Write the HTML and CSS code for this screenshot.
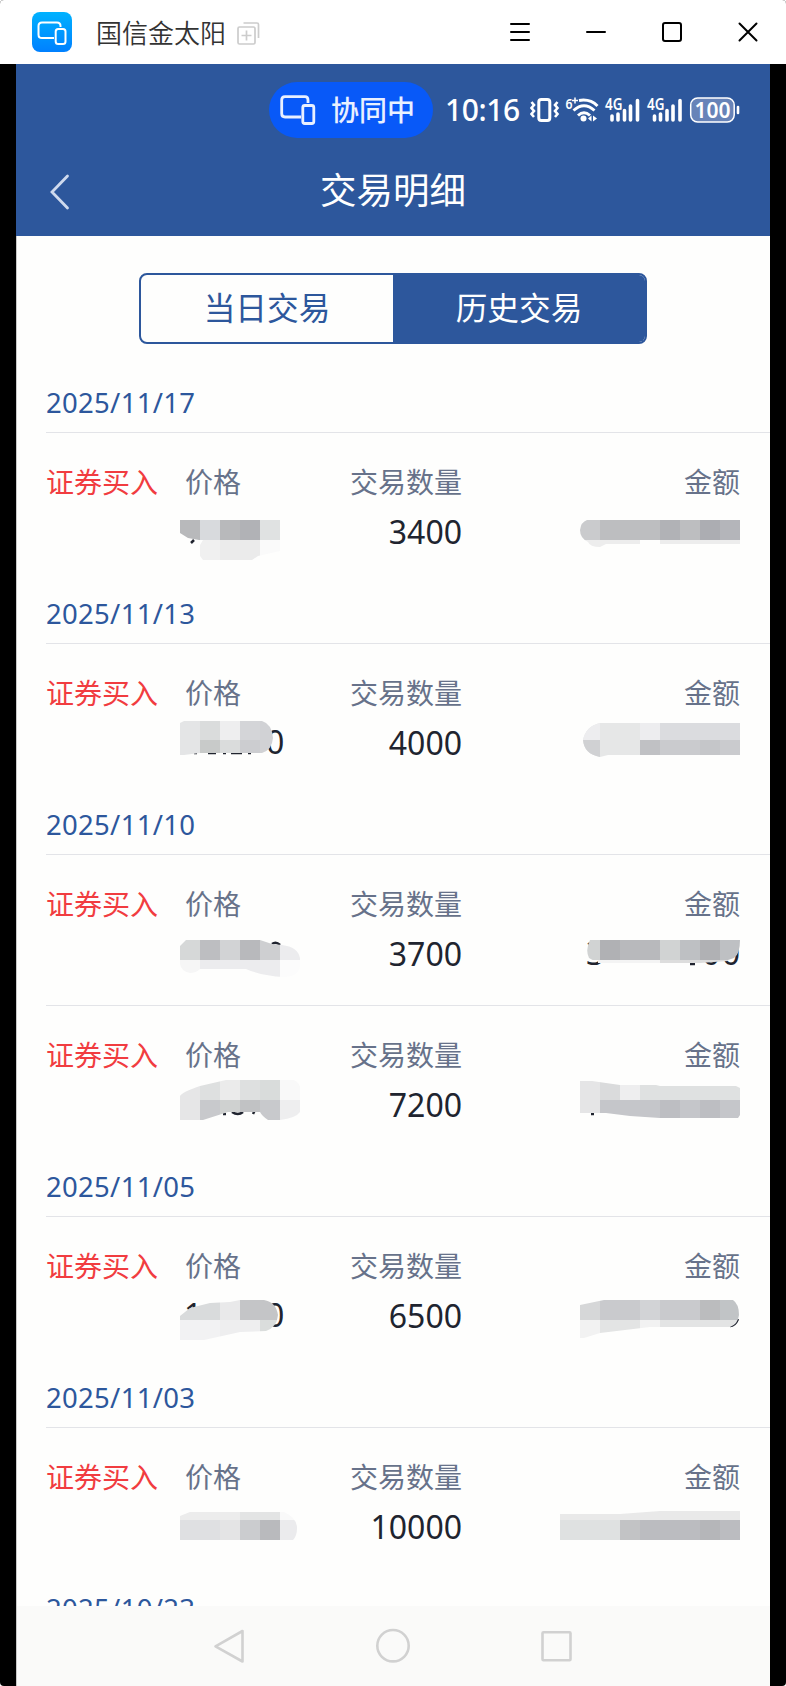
FILE: index.html
```html
<!DOCTYPE html>
<html lang="zh-CN">
<head>
<meta charset="utf-8">
<title>国信金太阳</title>
<link rel="stylesheet" href="styles.css">
</head>
<body>
<header class="window-bar">
  <svg class="app-icon" width="40" height="40" viewBox="0 0 40 40" fill="none" stroke="#fff" stroke-width="2">
    <defs><linearGradient id="sky" x2="0" y2="1"><stop stop-color="#00b2ff"/><stop offset="1" stop-color="#0080ff"/></linearGradient></defs>
    <rect width="40" height="40" rx="8" fill="url(#sky)" stroke="none"/>
    <path d="M22 26.100H10Q6.500 26.100 6.500 22.500V14Q6.500 10.500 10 10.500H25Q28.500 10.500 28.500 14V15"/>
    <rect x="23.700" y="17" width="9.800" height="15" rx="2.500"/>
  </svg>
  <span class="app-name">国信金太阳</span>
  <svg class="copy-icon" width="23" height="23" viewBox="0 0 23 23" fill="none" stroke="#ccc" stroke-width="1.700">
    <rect x="1" y="5" width="17" height="17" rx="1.500"/><path d="M6.500 1H20Q21.500 1 21.500 2.500V16M9.500 8.500v10M4.500 13.500h10"/>
  </svg>
  <svg class="window-tools" width="250" height="22" viewBox="0 0 250 22" fill="none" stroke="#000" stroke-width="2" stroke-linecap="round">
    <path d="M2 3H20M2 11H20M2 19H20M78 11H96"/><rect x="154" y="2" width="18" height="18" rx="2"/><path d="M230.500 2.500L247.500 19.500M247.500 2.500L230.500 19.500"/>
  </svg>
</header>
<main class="phone">
  <section class="top">
    <div class="status">
      <div class="pill">
        <svg width="36" height="30" viewBox="0 0 36 30" fill="none" stroke="#e8f0ff" stroke-width="2.800">
          <path d="M21 22H5Q1.700 22 1.700 18.500V5Q1.700 1.700 5 1.700H25Q28 1.700 28 5V8"/><rect x="22.800" y="10.500" width="11" height="18" rx="2"/>
        </svg>
        <span>协同中</span>
      </div>
      <span class="clock">10:16</span>
      <svg class="status-icons" width="212" height="30" viewBox="530 95 212 30" fill="none" stroke="#fff" stroke-width="2.600">
        <rect x="538.800" y="99.500" width="11" height="21" rx="2.500" stroke-width="3"/>
        <path d="M531.500 102l2.500 3-2.500 3 2.500 3-2.500 3 2.500 3M557.500 102l-2.500 3 2.500 3-2.500 3 2.500 3-2.500 3"/>
        <text class="tiny" x="565.500" y="108.500" textLength="7" lengthAdjust="spacingAndGlyphs">6</text><path d="M572 100.500h6M575 97.500v6" stroke-width="1.500"/>
        <path d="M579 100.500Q590 98.500 597.500 106M573.500 110.500Q584 101 594.500 110.500M578 115.500Q584 110 590 115.500" stroke-width="3"/>
        <circle cx="583.500" cy="118.500" r="3" fill="#fff" stroke="none"/><path d="M588 118.500l3.500-3v6zM593 115.500v6l4-3z" fill="#fff" stroke="none"/>
        <text class="net" x="605" y="109.500" textLength="17.500" lengthAdjust="spacingAndGlyphs">4G</text>
        <path d="M612 116V120M618 114V120M624.500 110.500V120M630.500 106V120M637.500 100.500V120" stroke-width="3.600" stroke-linecap="round"/>
        <text class="net" x="647" y="109.500" textLength="17.500" lengthAdjust="spacingAndGlyphs">4G</text>
        <path d="M654.500 116V120M660.500 114V120M667 110.500V120M673 106V120M680 100.500V120" stroke-width="3.600" stroke-linecap="round"/>
        <rect x="690.700" y="98" width="43.500" height="24" rx="7" fill="#6783b8" stroke-width="1.500"/>
        <path d="M738 107V113" stroke-width="2.600" stroke-linecap="round"/>
        <text class="charge" x="694.500" y="117.700" textLength="36">100</text>
      </svg>
    </div>
    <div class="nav-title">
      <svg class="back" width="20" height="36" viewBox="0 0 20 36" fill="none" stroke="#cfdaee" stroke-width="2.800" stroke-linecap="round"><path d="M17.500 2L2 18L17.500 34"/></svg>
      <h1>交易明细</h1>
    </div>
  </section>
  <section class="content">
    <div class="tabs"><button class="tab">当日交易</button><button class="tab active">历史交易</button></div>

    <h2 class="date">2025/11/17</h2>
    <article class="trade">
      <span class="kind">证券买入</span>
      <span class="price">价格</span>
      <div class="quantity"><span>交易数量</span><b>3400</b></div>
      <span class="amount">金额</span>
      <svg class="mask" viewBox="46 433 724 150">
        <clipPath id="p1"><path d="M180 520H280V551L258 556L252 560H203L200 556V545L203 540H199L188 538L180 533Z"/></clipPath>
        <clipPath id="a1"><path d="M587 520H740V544H606L600 547Q590 547 588 542Q580 538 580 530Q581 522 587 520Z"/></clipPath>
        <path class="ink" d="M194 540L191 543"/>
        <g clip-path="url(#p1)"><path fill="#b8b9bb" d="M180 520h20v20h-20zM220 520h20v20h-20z"/><path fill="#d8dadd" d="M200 520h20v20h-20z"/><path fill="#b1b2b6" d="M240 520h20v20h-20z"/><path fill="#e0e2e2" d="M260 520h20v20h-20z"/><path fill="#f0f0f0" d="M200 540h20v20h-20z"/><path fill="#ebebeb" d="M220 540h40v20h-40z"/><path fill="#fafafa" d="M260 540h20v20h-20z"/></g>
        <g clip-path="url(#a1)"><path fill="#cacbcd" d="M580 520h20v20h-20z"/><path fill="#bdbec0" d="M600 520h60v20h-60zM680 520h20v20h-20z"/><path fill="#b1b2b6" d="M660 520h20v20h-20z"/><path fill="#acadb2" d="M700 520h20v20h-20z"/><path fill="#b4b5ba" d="M720 520h20v20h-20z"/><path fill="#ededed" d="M580 540h60v8h-60zM660 540h80v4h-80z"/></g>
      </svg>
    </article>

    <h2 class="date">2025/11/13</h2>
    <article class="trade">
      <span class="kind">证券买入</span>
      <span class="price">价格</span>
      <div class="quantity"><span>交易数量</span><b>4000</b></div>
      <span class="amount">金额</span>
      <svg class="mask" viewBox="46 644 724 150">
        <clipPath id="p2"><path d="M184 721H262Q272 724 273 738Q272 750 262 753H200L184 755H180V723Z"/></clipPath>
        <clipPath id="a2"><path d="M600 723H740V755H608L600 757Q584 754 583 740Q586 726 600 723Z"/></clipPath>
        <text x="266" y="754">0</text><path class="ink" d="M194 753h3M208 753h8M223 753h3M231 753h11M248 753h3"/>
        <g clip-path="url(#p2)"><path fill="#e4e5e6" d="M180 720h20v36h-20z"/><path fill="#dadcdc" d="M200 720h20v20h-20zM220 740h20v20h-20z"/><path fill="#eeeeef" d="M220 720h20v20h-20z"/><path fill="#d4d5d8" d="M240 720h20v20h-20z"/><path fill="#d1d2d5" d="M260 720h20v40h-20z"/><path fill="#c8cac9" d="M200 740h20v20h-20z"/><path fill="#cccdd0" d="M240 740h20v20h-20z"/></g>
        <g clip-path="url(#a2)"><path fill="#e6e7e7" d="M580 720h60v40h-60z"/><path fill="#ededef" d="M580 720h20v20h-20zM640 720h20v20h-20z"/><path fill="#dbdcdf" d="M660 720h80v20h-80z"/><path fill="#d0d1d3" d="M580 740h20v20h-20z"/><path fill="#c0c1c4" d="M640 740h20v20h-20z"/><path fill="#cacbce" d="M660 740h80v20h-80z"/><path fill="#c5c6c9" d="M700 740h20v20h-20z"/></g>
      </svg>
    </article>

    <h2 class="date">2025/11/10</h2>
    <article class="trade">
      <span class="kind">证券买入</span>
      <span class="price">价格</span>
      <div class="quantity"><span>交易数量</span><b>3700</b></div>
      <span class="amount">金额</span>
      <svg class="mask" viewBox="46 855 724 150">
        <clipPath id="p3"><path d="M186 940H260L272 944L282 945Q298 947 300 958V966Q298 977 284 977Q262 976 246 969H200Q196 973 190 973Q181 971 180 964V946Z"/></clipPath>
        <clipPath id="a3"><path d="M590 940H740Q740 954 734 958L728 960V961L700 963H598L589 958Q585 950 590 940Z"/></clipPath>
        <path class="ink" d="M272 944q4-3 8 1"/><text x="586" y="965">3</text><text x="702" y="965" textLength="38">00</text><path class="ink" d="M690 964h5"/>
        <g clip-path="url(#p3)"><path fill="#d6d8d8" d="M180 940h20v20h-20z"/><path fill="#bdbec1" d="M200 940h20v20h-20z"/><path fill="#d2d3d5" d="M220 940h20v20h-20z"/><path fill="#b8b9bc" d="M240 940h20v20h-20z"/><path fill="#cecfd1" d="M260 940h20v20h-20z"/><path fill="#ececee" d="M280 940h20v20h-20zM200 960h80v20h-80z"/><path fill="#f6f6f6" d="M180 960h20v20h-20z"/><path fill="#fcfcfc" d="M280 960h20v20h-20z"/></g>
        <g clip-path="url(#a3)"><path fill="#d1d3d3" d="M580 940h20v20h-20zM660 940h20v20h-20z"/><path fill="#b0b1b4" d="M600 940h20v20h-20zM700 940h20v20h-20z"/><path fill="#b8b9bc" d="M620 940h40v20h-40z"/><path fill="#bec0c3" d="M680 940h20v20h-20zM720 940h20v20h-20z"/><path fill="#f4f4f4" d="M598 960h62v5h-62z"/><path fill="#ddd" d="M660 960h70v4h-70z"/></g>
      </svg>
    </article>
    <article class="trade">
      <span class="kind">证券买入</span>
      <span class="price">价格</span>
      <div class="quantity"><span>交易数量</span><b>7200</b></div>
      <span class="amount">金额</span>
      <svg class="mask" viewBox="46 1006 724 150">
        <clipPath id="p4"><path d="M226 1080H294Q300 1083 300 1088V1112Q296 1118 280 1120H268Q262 1116 260 1112H228L203 1120H180V1096Q182 1092 200 1086Z"/></clipPath>
        <clipPath id="a4"><path d="M580 1081H592L620 1085H656L660 1086H736L740 1088V1115L738 1118H660L630 1116L606 1113H580Z"/></clipPath>
        <path class="ink" d="M223 1114h3M232 1112q6 4 11 0M253 1114l2-4M591 1114h3"/>
        <g clip-path="url(#p4)"><path fill="#e6e6e7" d="M180 1080h20v40h-20z"/><path fill="#dee0e0" d="M200 1080h20v20h-20zM240 1080h20v20h-20z"/><path fill="#ebebeb" d="M220 1080h20v20h-20z"/><path fill="#d9dcdb" d="M260 1080h20v20h-20z"/><path fill="#f9f9f9" d="M280 1080h20v20h-20z"/><path fill="#c8c9cc" d="M200 1100h20v20h-20zM260 1100h20v20h-20z"/><path fill="#cfd1d0" d="M220 1100h20v20h-20z"/><path fill="#c1c2c4" d="M240 1100h20v20h-20z"/><path fill="#eeeeef" d="M280 1100h20v20h-20z"/></g>
        <g clip-path="url(#a4)"><path fill="#e5e5e6" d="M580 1080h20v40h-20z"/><path fill="#dadbdc" d="M600 1080h20v20h-20z"/><path fill="#eeeeef" d="M620 1080h20v20h-20z"/><path fill="#dfe1e1" d="M640 1080h100v20h-100z"/><path fill="#c5c6ca" d="M600 1100h140v20h-140z"/><path fill="#bdbec2" d="M660 1100h20v20h-20zM700 1100h20v20h-20z"/></g>
      </svg>
    </article>

    <h2 class="date">2025/11/05</h2>
    <article class="trade">
      <span class="kind">证券买入</span>
      <span class="price">价格</span>
      <div class="quantity"><span>交易数量</span><b>6500</b></div>
      <span class="amount">金额</span>
      <svg class="mask" viewBox="46 1217 724 150">
        <clipPath id="p5"><path d="M180 1316L190 1308L210 1303L230 1302L240 1300H264Q276 1302 278 1315Q277 1327 266 1331L240 1332L204 1340H180Z"/></clipPath>
        <clipPath id="a5"><path d="M580 1305L604 1300H733Q739 1304 739 1315Q738 1324 730 1327H650L600 1333L584 1338H580Z"/></clipPath>
        <text x="184" y="1327">1</text><text x="266" y="1327">0</text><path class="ink" d="M730 1326q5 0 8-7"/>
        <g clip-path="url(#p5)"><path fill="#d9dbdc" d="M180 1300h40v20h-40z"/><path fill="#e9e9ea" d="M220 1300h20v20h-20z"/><path fill="#c4c5c7" d="M240 1300h40v20h-40z"/><path fill="#f2f2f3" d="M180 1320h40v20h-40z"/><path fill="#eeeeef" d="M220 1320h40v20h-40z"/><path fill="#dadddc" d="M260 1320h20v20h-20z"/></g>
        <g clip-path="url(#a5)"><path fill="#d6d7d8" d="M580 1300h20v20h-20z"/><path fill="#c9cacd" d="M600 1300h100v20h-100z"/><path fill="#d2d3d6" d="M640 1300h20v20h-20z"/><path fill="#bbbcbe" d="M700 1300h20v20h-20z"/><path fill="#c1c4c6" d="M720 1300h20v20h-20z"/><path fill="#f2f2f2" d="M580 1320h20v20h-20zM640 1320h20v20h-20z"/><path fill="#e3e4e4" d="M600 1320h40v20h-40zM660 1320h80v20h-80z"/></g>
      </svg>
    </article>

    <h2 class="date">2025/11/03</h2>
    <article class="trade">
      <span class="kind">证券买入</span>
      <span class="price">价格</span>
      <div class="quantity"><span>交易数量</span><b>10000</b></div>
      <span class="amount">金额</span>
      <svg class="mask" viewBox="46 1428 724 150">
        <clipPath id="p6"><path d="M190 1512H284Q297 1518 297 1528Q297 1536 293 1540H180V1516Z"/></clipPath>
        <clipPath id="a6"><path d="M560 1514H620L660 1511H740V1540H560Z"/></clipPath>
        <g clip-path="url(#p6)"><path fill="#ececec" d="M180 1510h60v10h-60z"/><path fill="#e3e4e4" d="M240 1510h40v10h-40z"/><path fill="#f9f9f9" d="M280 1510h20v10h-20z"/><path fill="#dfe0e2" d="M180 1520h40v20h-40z"/><path fill="#e4e4e5" d="M220 1520h20v20h-20z"/><path fill="#cbcccf" d="M240 1520h20v20h-20z"/><path fill="#b9babd" d="M260 1520h20v20h-20z"/><path fill="#ebebed" d="M280 1520h20v20h-20z"/></g>
        <g clip-path="url(#a6)"><path fill="#e9e9e9" d="M560 1510h180v10h-180z"/><path fill="#dfe1e1" d="M560 1520h60v20h-60z"/><path fill="#c2c3c5" d="M620 1520h20v20h-20z"/><path fill="#bbbcc0" d="M640 1520h100v20h-100z"/><path fill="#b5b6b9" d="M700 1520h20v20h-20z"/></g>
      </svg>
    </article>
    <h2 class="date">2025/10/23</h2>
  </section>
  <nav class="keys">
    <svg width="754" height="80" viewBox="16 1606 754 80" fill="none" stroke="#d1d1d1" stroke-width="2.600" stroke-linejoin="round">
      <path d="M242.500 1631V1661.500L215.500 1646.300Z"/><circle cx="393" cy="1645.700" r="15.700"/><rect x="542.500" y="1632.200" width="28" height="28" rx="1"/>
    </svg>
  </nav>
</main>
</body>
</html>
```

FILE: styles.css
```css
* { box-sizing: border-box; margin: 0; }
html { background: #fff; }
body {
  width: 786px;
  height: 1686px;
  overflow: hidden;
  display: flex;
  flex-direction: column;
  background: #000;
  border-radius: 4px;
  font-family: "Noto Sans", "Noto Sans CJK SC", sans-serif;
}
svg { display: block; flex: none; }
.window-bar {
  height: 64px;
  flex: none;
  display: flex;
  align-items: center;
  padding: 0 27px 0 32px;
  background: #fff;
}
.app-name {
  margin-left: 24px;
  font: 350 26px/40px "Noto Sans CJK SC", sans-serif;
  color: #333;
}
.copy-icon { margin: 2px 0 0 11px; }
.window-tools { margin-left: auto; }
.phone {
  width: 754px;
  height: 1622px;
  margin: 0 16px;
  display: flex;
  flex-direction: column;
  background: #fefefd;
}
.top { height: 172px; flex: none; background: #2d579c; }
.status {
  height: 91px;
  display: flex;
  align-items: center;
  padding-left: 253px;
  color: #fff;
}
.pill {
  width: 164px;
  height: 56px;
  flex: none;
  display: flex;
  align-items: center;
  gap: 15px;
  padding-left: 11px;
  border-radius: 28px;
  background: #0859f8;
  font: 500 28px/54px "Noto Sans CJK SC", sans-serif;
  color: #e8f0ff;
}
.pill span { padding-bottom: 2px; }
.clock { width: 75px; margin-left: 12px; font: 500 30px/40px "Noto Sans", sans-serif; letter-spacing: -.4px; }
.status-icons { margin-left: 10px; }
.status-icons text { fill: #fff; stroke: none; font-family: "Noto Sans", sans-serif; font-weight: 600; }
.status-icons .tiny { font-size: 14px; }
.status-icons .net { font-size: 15.500px; }
.status-icons .charge { font-size: 21px; }
.nav-title { display: flex; align-items: center; height: 73px; padding-left: 34px; }
.nav-title h1 {
  width: 646px;
  padding-bottom: 5px;
  text-align: center;
  font: 400 36.500px/68px "Noto Sans CJK SC", sans-serif;
  color: #fff;
}
.content {
  height: 1370px;
  flex: none;
  overflow: hidden;
  padding: 37px 0 0 29px;
  border-left: 1px solid #c8c8c8;
}
.tabs {
  display: flex;
  width: 508px;
  height: 71px;
  margin: 0 0 29px 93px;
  overflow: hidden;
  border: 2px solid #2d579c;
  border-radius: 8px;
}
.tab {
  flex: 1;
  padding: 0 0 6px;
  border: 0;
  background: transparent;
  color: #2d579c;
  font: 400 31.700px/60px "Noto Sans CJK SC", sans-serif;
}
.tab.active { background: #2d579c; color: #fff; }
.date {
  height: 59px;
  font: 400 27.500px/60px "Noto Sans", sans-serif;
  letter-spacing: .3px;
  color: #2d579c;
}
.date:not(:first-of-type) { height: 60px; line-height: 62px; }
.trade {
  position: relative;
  display: grid;
  grid-template-columns: 139px 129px 148px 278px 1fr;
  height: 151px;
  padding-top: 26px;
  border-top: 1px solid #e3e4e8;
  font: 400 28px/44px "Noto Sans CJK SC", sans-serif;
  color: #67728a;
}
.kind { color: #f13c40; }
.quantity { display: flex; flex-direction: column; gap: 7px; text-align: right; }
.quantity b { font: 400 32px/44px "Noto Sans", sans-serif; color: #20242f; }
.amount { text-align: right; }
.mask { position: absolute; left: 0; top: 0; width: 724px; height: 150px; }
.mask text { font: 400 32px "Noto Sans", sans-serif; fill: #20242f; }
.ink { fill: none; stroke: #20242f; stroke-width: 2.500px; }
.keys { height: 80px; background: #fafaf9; border-left: 1px solid #c8c8c8; }
.keys svg { margin-left: -1px; }
```
